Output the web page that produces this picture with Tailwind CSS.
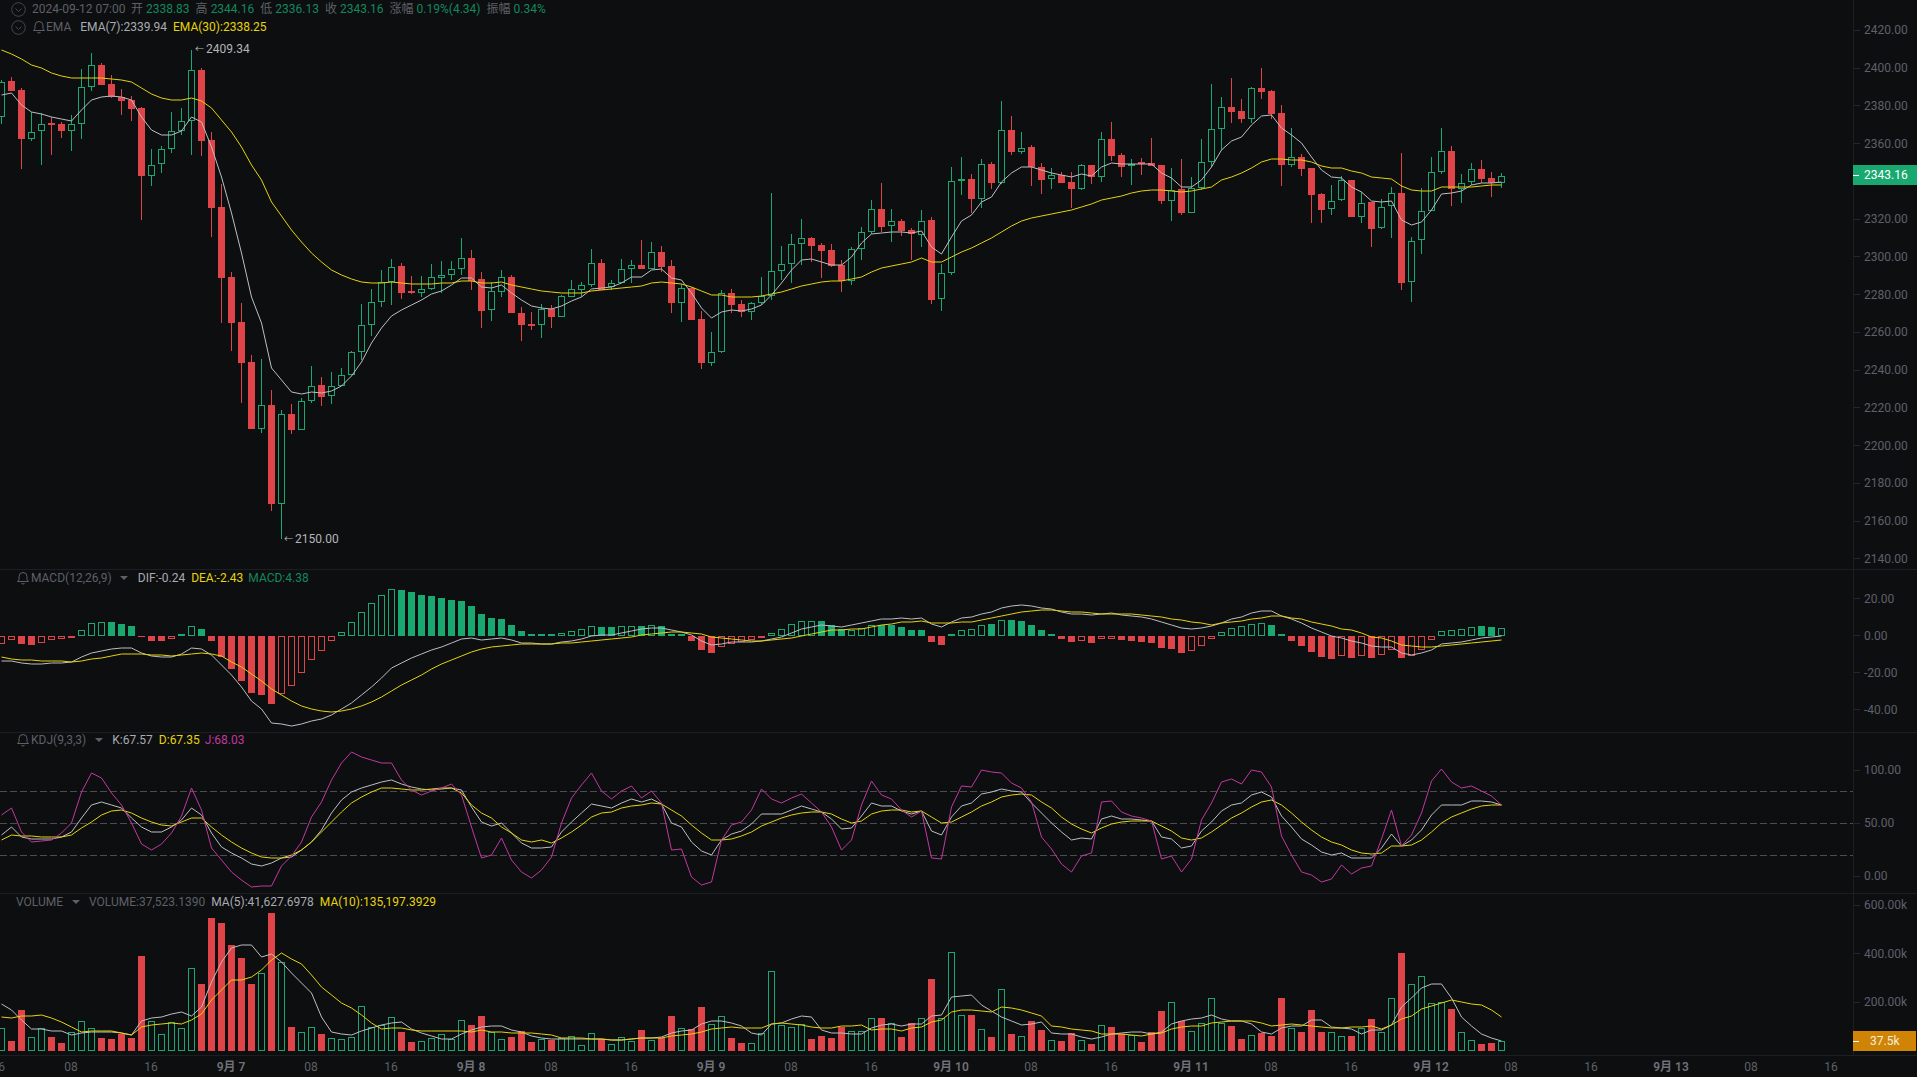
<!DOCTYPE html>
<html lang="zh-CN">
<head>
    <meta charset="UTF-8">
    <meta name="viewport" content="width=device-width, initial-scale=1.0">
    <title>ETH K-line</title>
    <script src="https://cdn.jsdelivr.net/npm/@tailwindcss/browser@4"></script>
</head>
<body class="relative w-[1917px] h-[1077px] overflow-hidden bg-[#0d0e10] text-[12px] leading-none text-[#5e6068] font-['Roboto','Noto_Sans_CJK_SC',sans-serif]">

    <!-- chart canvas, drawn by the script at the bottom -->
    <svg id="chart" class="absolute left-0 top-0" width="1853" height="1055" viewBox="0 0 1853 1055"></svg>

    <div class="absolute inset-0 flex flex-col">

        <!-- Main panel -->
        <section class="flex h-[570px] border-b border-[#1c1e22]">
            <div class="relative flex-1">
                <div class="flex items-center h-[18px]">
                    <svg class="ml-[11px] mr-[6px]" width="15" height="15" viewBox="0 0 15 15" fill="none" stroke="#45474d"><circle cx="7.5" cy="7.5" r="6.8"/><path d="M4.5 6.5l3 3 3-3"/></svg>
                    <span>2024-09-12 07:00</span>
                    <span class="ml-[5.5px]">开</span><span class="ml-[3px] text-[#12895c]">2338.83</span>
                    <span class="ml-[6px]">高</span><span class="ml-[3px] text-[#12895c]">2344.16</span>
                    <span class="ml-[6px]">低</span><span class="ml-[3px] text-[#12895c]">2336.13</span>
                    <span class="ml-[6px]">收</span><span class="ml-[3px] text-[#12895c]">2343.16</span>
                    <span class="ml-[6px]">涨幅</span><span class="ml-[3px] text-[#12895c]">0.19%(4.34)</span>
                    <span class="ml-[6px]">振幅</span><span class="ml-[3px] text-[#12895c]">0.34%</span>
                </div>
                <div class="flex items-center h-[18px]">
                    <svg class="ml-[11px] mr-[6px]" width="15" height="15" viewBox="0 0 15 15" fill="none" stroke="#45474d"><circle cx="7.5" cy="7.5" r="6.8"/><path d="M4.5 6.5l3 3 3-3"/></svg>
                    <svg width="14" height="14" viewBox="0 0 14 14" fill="none" stroke="#5e6068"><path d="M7 1.5a4 4 0 0 0-4 4v3.2L1.5 10.5h11L11 8.7V5.5a4 4 0 0 0-4-4zM5.5 12a1.6 1.6 0 0 0 3 0"/></svg>
                    <span>EMA</span>
                    <span class="ml-[9px] text-[#a9abb0]">EMA(7):2339.94</span>
                    <span class="ml-[6px] text-[#e6d30c]">EMA(30):2338.25</span>
                </div>
                <span class="absolute left-[195px] top-[43px] flex items-center text-[#b4b5b8]"><span class="text-[9px]">←</span><span class="ml-[2px]">2409.34</span></span>
                <span class="absolute left-[284px] top-[533px] flex items-center text-[#b4b5b8]"><span class="text-[9px]">←</span><span class="ml-[2px]">2150.00</span></span>
            </div>
            <div class="relative w-[64px] shrink-0 border-l border-[#1c1e22] pt-[11.5px]">
                <div class="flex items-center h-[37.75px]"><i class="w-[6px] h-px bg-[#24262b]"></i><span class="ml-[4px]">2420.00</span></div>
                <div class="flex items-center h-[37.75px]"><i class="w-[6px] h-px bg-[#24262b]"></i><span class="ml-[4px]">2400.00</span></div>
                <div class="flex items-center h-[37.75px]"><i class="w-[6px] h-px bg-[#24262b]"></i><span class="ml-[4px]">2380.00</span></div>
                <div class="flex items-center h-[37.75px]"><i class="w-[6px] h-px bg-[#24262b]"></i><span class="ml-[4px]">2360.00</span></div>
                <div class="h-[37.75px]"></div>
                <div class="flex items-center h-[37.75px]"><i class="w-[6px] h-px bg-[#24262b]"></i><span class="ml-[4px]">2320.00</span></div>
                <div class="flex items-center h-[37.75px]"><i class="w-[6px] h-px bg-[#24262b]"></i><span class="ml-[4px]">2300.00</span></div>
                <div class="flex items-center h-[37.75px]"><i class="w-[6px] h-px bg-[#24262b]"></i><span class="ml-[4px]">2280.00</span></div>
                <div class="flex items-center h-[37.75px]"><i class="w-[6px] h-px bg-[#24262b]"></i><span class="ml-[4px]">2260.00</span></div>
                <div class="flex items-center h-[37.75px]"><i class="w-[6px] h-px bg-[#24262b]"></i><span class="ml-[4px]">2240.00</span></div>
                <div class="flex items-center h-[37.75px]"><i class="w-[6px] h-px bg-[#24262b]"></i><span class="ml-[4px]">2220.00</span></div>
                <div class="flex items-center h-[37.75px]"><i class="w-[6px] h-px bg-[#24262b]"></i><span class="ml-[4px]">2200.00</span></div>
                <div class="flex items-center h-[37.75px]"><i class="w-[6px] h-px bg-[#24262b]"></i><span class="ml-[4px]">2180.00</span></div>
                <div class="flex items-center h-[37.75px]"><i class="w-[6px] h-px bg-[#24262b]"></i><span class="ml-[4px]">2160.00</span></div>
                <div class="flex items-center h-[37.75px]"><i class="w-[6px] h-px bg-[#24262b]"></i><span class="ml-[4px]">2140.00</span></div>
                <!-- last price tag -->
                <div class="absolute left-0 top-[165px] flex items-center w-[64px] h-[20px] -ml-px bg-[#19a870] text-white">
                    <i class="w-[6px] h-px bg-white"></i><span class="ml-[5px]">2343.16</span>
                </div>
            </div>
        </section>

        <!-- MACD -->
        <section class="flex h-[163px] border-b border-[#1c1e22]">
            <div class="flex-1 flex items-start pl-[16px] pt-[2px]">
                <div class="flex items-center h-[12px]">
                    <svg width="14" height="14" viewBox="0 0 14 14" fill="none" stroke="#5e6068"><path d="M7 1.5a4 4 0 0 0-4 4v3.2L1.5 10.5h11L11 8.7V5.5a4 4 0 0 0-4-4zM5.5 12a1.6 1.6 0 0 0 3 0"/></svg>
                    <span class="ml-px">MACD(12,26,9)</span>
                    <i class="ml-[8px] w-0 h-0 border-x-[4px] border-t-[4px] border-x-transparent border-t-[#5e6068]"></i>
                    <span class="ml-[10px] text-[#a9abb0]">DIF:-0.24</span>
                    <span class="ml-[6px] text-[#e6d30c]">DEA:-2.43</span>
                    <span class="ml-[5px] text-[#12895c]">MACD:4.38</span>
                </div>
            </div>
            <div class="w-[64px] shrink-0 border-l border-[#1c1e22] pt-[10px]">
                <div class="flex items-center h-[37px]"><i class="w-[6px] h-px bg-[#24262b]"></i><span class="ml-[4px]">20.00</span></div>
                <div class="flex items-center h-[37px]"><i class="w-[6px] h-px bg-[#24262b]"></i><span class="ml-[4px]">0.00</span></div>
                <div class="flex items-center h-[37px]"><i class="w-[6px] h-px bg-[#24262b]"></i><span class="ml-[4px]">-20.00</span></div>
                <div class="flex items-center h-[37px]"><i class="w-[6px] h-px bg-[#24262b]"></i><span class="ml-[4px]">-40.00</span></div>
            </div>
        </section>

        <!-- KDJ -->
        <section class="flex h-[161px] border-b border-[#1c1e22]">
            <div class="flex-1 flex items-start pl-[16px] pt-[1px]">
                <div class="flex items-center h-[12px]">
                    <svg width="14" height="14" viewBox="0 0 14 14" fill="none" stroke="#5e6068"><path d="M7 1.5a4 4 0 0 0-4 4v3.2L1.5 10.5h11L11 8.7V5.5a4 4 0 0 0-4-4zM5.5 12a1.6 1.6 0 0 0 3 0"/></svg>
                    <span class="ml-px">KDJ(9,3,3)</span>
                    <i class="ml-[9px] w-0 h-0 border-x-[4px] border-t-[4px] border-x-transparent border-t-[#5e6068]"></i>
                    <span class="ml-[9px] text-[#a9abb0]">K:67.57</span>
                    <span class="ml-[6px] text-[#e6d30c]">D:67.35</span>
                    <span class="ml-[5px] text-[#c2389f]">J:68.03</span>
                </div>
            </div>
            <div class="w-[64px] shrink-0 border-l border-[#1c1e22] pt-[10.5px]">
                <div class="flex items-center h-[53px]"><i class="w-[6px] h-px bg-[#24262b]"></i><span class="ml-[4px]">100.00</span></div>
                <div class="flex items-center h-[53px]"><i class="w-[6px] h-px bg-[#24262b]"></i><span class="ml-[4px]">50.00</span></div>
                <div class="flex items-center h-[53px]"><i class="w-[6px] h-px bg-[#24262b]"></i><span class="ml-[4px]">0.00</span></div>
            </div>
        </section>

        <!-- Volume -->
        <section class="flex h-[162px] border-b border-[#1c1e22]">
            <div class="flex-1 flex items-start pl-[16px] pt-[2px]">
                <div class="flex items-center h-[12px]">
                    <span>VOLUME</span>
                    <i class="ml-[9px] w-0 h-0 border-x-[4px] border-t-[4px] border-x-transparent border-t-[#5e6068]"></i>
                    <span class="ml-[9px]">VOLUME:37,523.1390</span>
                    <span class="ml-[6px] text-[#a9abb0]">MA(5):41,627.6978</span>
                    <span class="ml-[6px] text-[#e6d30c]">MA(10):135,197.3929</span>
                </div>
            </div>
            <div class="relative w-[64px] shrink-0 border-l border-[#1c1e22]">
                <div class="-mt-[13px]">
                    <div class="flex items-center h-[48.5px]"><i class="w-[6px] h-px bg-[#24262b]"></i><span class="ml-[4px]">600.00k</span></div>
                    <div class="flex items-center h-[48.5px]"><i class="w-[6px] h-px bg-[#24262b]"></i><span class="ml-[4px]">400.00k</span></div>
                    <div class="flex items-center h-[48.5px]"><i class="w-[6px] h-px bg-[#24262b]"></i><span class="ml-[4px]">200.00k</span></div>
                </div>
                <div class="absolute left-0 top-[137px] flex items-center w-[63px] h-[20px] -ml-px bg-[#d08405] text-[#f4ecdc]">
                    <i class="w-[6px] h-px bg-white"></i><span class="ml-[11px]">37.5k</span>
                </div>
            </div>
        </section>

        <!-- Time axis -->
        <footer class="flex items-center flex-1 -ml-[49px]">
            <span class="w-[80px] shrink-0 text-right pr-[26px]">16</span>
            <span class="w-[80px] shrink-0 text-center">08</span>
            <span class="w-[80px] shrink-0 text-center">16</span>
            <span class="w-[80px] shrink-0 text-center font-semibold text-[#6f7178]">9月 7</span>
            <span class="w-[80px] shrink-0 text-center">08</span>
            <span class="w-[80px] shrink-0 text-center">16</span>
            <span class="w-[80px] shrink-0 text-center font-semibold text-[#6f7178]">9月 8</span>
            <span class="w-[80px] shrink-0 text-center">08</span>
            <span class="w-[80px] shrink-0 text-center">16</span>
            <span class="w-[80px] shrink-0 text-center font-semibold text-[#6f7178]">9月 9</span>
            <span class="w-[80px] shrink-0 text-center">08</span>
            <span class="w-[80px] shrink-0 text-center">16</span>
            <span class="w-[80px] shrink-0 text-center font-semibold text-[#6f7178]">9月 10</span>
            <span class="w-[80px] shrink-0 text-center">08</span>
            <span class="w-[80px] shrink-0 text-center">16</span>
            <span class="w-[80px] shrink-0 text-center font-semibold text-[#6f7178]">9月 11</span>
            <span class="w-[80px] shrink-0 text-center">08</span>
            <span class="w-[80px] shrink-0 text-center">16</span>
            <span class="w-[80px] shrink-0 text-center font-semibold text-[#6f7178]">9月 12</span>
            <span class="w-[80px] shrink-0 text-center">08</span>
            <span class="w-[80px] shrink-0 text-center">16</span>
            <span class="w-[80px] shrink-0 text-center font-semibold text-[#6f7178]">9月 13</span>
            <span class="w-[80px] shrink-0 text-center">08</span>
            <span class="w-[80px] shrink-0 text-center">16</span>
        </footer>
    </div>

    <script>
        const GREEN = '#19a870', RED = '#df4548', WHITE = '#bdbec2', YELLOW = '#e6d30c', PINK = '#c2389f';

        // hourly candles, in screen pixels: high, body top, body bottom, low, 1 = up
        const candles = [
            [80,82,117,124,1],[77,81,91,91,0],[88,90,139,169,0],[112,132,139,141,1],[113,124,131,165,1],[117,123,125,155,0],
            [122,124,131,138,0],[115,124,131,151,1],[69,87,124,139,1],[53,65,87,91,1],[63,65,85,85,0],[75,84,97,98,0],
            [89,97,101,115,0],[96,100,109,121,0],[107,108,176,220,0],[149,165,176,186,1],[146,149,164,173,1],[112,131,149,153,1],
            [108,121,131,135,1],[50,70,121,155,1],[68,70,141,156,0],[132,140,208,237,0],[184,207,278,323,0],[272,277,323,351,0],
            [303,322,363,403,0],[355,362,429,429,0],[359,405,429,433,1],[390,405,504,511,0],[410,414,504,539,1],[404,414,430,434,0],
            [398,401,430,430,1],[366,386,401,403,1],[377,385,397,406,0],[372,386,396,404,1],[368,375,386,386,1],[351,352,375,375,1],
            [304,325,352,360,1],[289,302,325,336,1],[270,282,302,307,1],[259,267,282,305,1],[263,266,293,299,0],[276,291,293,294,0],
            [276,289,293,297,1],[264,277,289,290,1],[261,275,278,293,1],[261,269,275,280,1],[238,258,269,275,1],[250,258,281,290,0],
            [272,279,311,328,0],[282,291,310,321,1],[270,277,292,297,1],[275,277,313,313,0],[307,313,325,341,0],[312,324,326,330,0],
            [304,309,325,338,1],[305,309,317,328,0],[295,296,317,317,1],[280,289,297,297,1],[282,285,290,297,1],[249,263,285,287,1],
            [259,263,290,290,0],[280,283,287,290,1],[259,269,283,283,1],[260,265,269,283,1],[240,265,269,269,0],[242,252,269,269,1],
            [246,252,267,272,0],[260,266,303,313,0],[284,288,303,322,1],[287,288,320,320,0],[311,319,363,369,0],[332,352,363,366,1],
            [290,293,352,353,1],[289,293,305,313,0],[300,304,312,317,0],[302,303,312,320,1],[277,296,303,305,1],[193,271,296,300,1],
            [246,264,271,280,1],[234,244,264,283,1],[219,238,244,265,1],[237,238,246,262,0],[243,245,251,278,0],[244,250,266,267,0],
            [260,265,281,292,0],[247,249,281,285,1],[227,232,249,260,1],[200,209,232,234,1],[183,209,227,232,0],[209,221,226,242,1],
            [219,221,231,236,0],[228,230,234,260,0],[210,221,235,247,1],[217,220,300,304,0],[264,273,299,311,1],[167,181,273,275,1],
            [157,179,181,195,1],[174,179,199,213,0],[159,164,199,208,1],[162,164,183,189,0],[101,130,183,184,1],[116,130,152,155,0],
            [132,148,152,154,1],[145,147,167,186,0],[163,167,180,194,0],[168,175,179,189,1],[172,175,183,183,0],[172,182,189,208,0],
            [164,165,189,190,1],[165,165,177,184,0],[132,139,177,182,1],[122,139,156,161,0],[153,155,167,177,0],[159,164,166,185,1],
            [158,162,164,175,0],[138,163,166,166,0],[165,165,201,204,0],[168,190,201,221,1],[159,189,213,215,0],[177,188,213,213,1],
            [139,162,188,190,1],[84,129,162,167,1],[97,107,129,150,1],[78,107,112,123,0],[99,111,119,123,0],[87,88,119,123,1],
            [68,88,92,99,0],[90,91,114,119,0],[105,113,165,186,0],[128,157,165,167,1],[154,157,169,176,0],[168,168,195,223,0],
            [193,194,210,223,0],[185,201,209,215,1],[176,180,200,201,1],[180,180,217,217,0],[192,203,217,223,1],[202,202,229,247,0],
            [199,207,228,229,1],[187,193,206,238,1],[153,193,283,290,0],[237,241,282,302,1],[188,211,240,254,1],[157,172,211,211,1],
            [128,151,172,174,1],[146,151,189,206,0],[174,183,189,203,1],[163,169,182,185,1],[160,169,179,183,0],[172,178,183,197,0],
            [173,176,183,188,1]
        ];

        const ema7 = [95,93,105,112,114,117,119,121,110,100,97,96,97,100,117,130,135,135,131,117,122,147,177,213,253,297,323,368,380,392,394,392,393,391,386,376,362,343,328,316,310,305,300,294,291,285,278,278,287,288,285,293,300,306,308,309,306,301,297,289,288,287,283,277,277,270,269,278,280,293,308,318,312,310,311,309,305,295,283,270,260,259,262,265,265,257,243,234,233,232,232,233,231,247,254,237,221,215,202,197,182,173,167,167,170,173,175,177,174,176,167,163,164,164,164,164,173,178,187,187,180,167,150,141,137,125,116,115,128,135,143,157,170,177,178,187,192,201,202,201,220,225,222,210,194,193,191,185,183,183,182];
        const ema30 = [50,54,59,65,68,73,76,78,78,78,78,79,80,82,88,94,98,100,100,98,101,108,120,132,147,165,180,202,216,230,242,253,262,270,275,279,282,283,283,282,283,284,284,284,283,283,281,281,283,283,282,285,287,289,291,292,293,293,293,291,290,289,288,287,286,283,282,283,284,287,291,295,295,297,297,297,296,294,292,289,286,284,282,281,281,279,277,272,268,266,264,262,258,262,262,257,252,248,243,238,232,226,221,218,216,214,212,210,207,204,200,198,196,193,191,190,190,191,192,191,189,187,180,177,173,168,162,159,159,160,160,162,166,168,168,171,173,177,178,179,186,190,191,191,187,187,187,187,186,185,185];

        // MACD histogram: pixels above the zero line at y=636
        const hist = [-8.3,-4,-7.7,-9,-6.7,-4.3,-3.3,-1.7,5.7,12.7,14,14,12,10,-1.3,-5,-5,-2.7,2,9.7,7,-5,-20.7,-33,-45,-57,-59,-68,-57.7,-49.7,-36.7,-23.7,-14.7,-4.7,3.7,13.7,23.7,32.7,40.7,46.7,46,43.7,41.3,40.3,38,36,35,30,22,18,17,11,5,2,1.7,1.7,3,4.7,6.7,9.7,9,9,9.7,9.7,9.7,10.7,9.7,2.5,2,-5.3,-14.3,-17.3,-11,-7.7,-6.3,-3.7,-2.3,3.3,7.3,12.3,15.3,15.3,14.7,10.7,6.7,6.3,8,11.3,11.3,10.7,8.7,5.7,5.7,-6.3,-9.3,1.7,6.3,7.3,11.3,11.7,16.3,15.7,14.7,10.7,5.7,1.7,-3.3,-6.3,-5,-7.3,-3,-3,-4.3,-5.3,-6.3,-7.3,-12.3,-13.3,-17.3,-15.3,-10,-3,4.3,8.3,9.7,12.3,13.3,10.7,1.7,-5.3,-10.3,-16.3,-21.3,-23.3,-20,-22.3,-20,-22.3,-19,-14.3,-22.3,-20.3,-14,-3.7,5.3,6.3,7.3,9.3,9.7,8.7,8.3];
        const histHollow = new Set([0,1,4,5,6,7,8,9,10,17,19,28,29,30,31,32,33,34,35,36,37,38,39,56,57,58,59,62,63,65,72,73,74,75,77,78,79,80,81,85,86,87,96,97,98,100,108,110,111,119,120,121,122,123,124,125,126,134,136,138,139,141,142,143,144,145,146,147,150]);
        const dif = [661,661,663,664,664,663,663,662,657,653,651,649,648,648,653,656,657,657,654,648,649,655,665,675,687,701,709,723,724,726,724,721,719,715,709,703,695,687,678,668,663,658,654,650,647,643,639,638,640,639,638,640,643,643,644,644,642,641,639,636,635,635,633,631,629,628,628,630,632,635,641,645,644,642,642,642,641,639,637,633,629,627,625,626,627,625,623,621,619,619,618,619,618,624,627,622,618,617,614,612,608,606,605,606,608,609,612,614,614,615,614,613,615,616,617,619,622,625,628,629,628,626,623,619,617,613,611,611,616,619,623,628,632,636,638,641,643,646,647,647,653,655,653,650,644,643,642,640,638,637,636];
        const dea = [657,659,660,660,661,661,661,662,661,659,658,656,654,654,654,655,655,656,655,654,653,654,656,662,667,674,681,689,695,701,706,709,711,712,711,709,706,702,697,691,685,680,675,669,664,660,656,652,649,647,646,645,644,644,644,644,643,643,642,641,640,639,638,637,635,634,633,632,632,633,634,637,638,639,640,641,641,640,639,638,636,634,632,630,630,629,629,627,625,624,622,622,621,623,623,623,622,622,620,618,616,614,612,611,610,610,611,612,612,613,614,614,614,614,615,616,617,619,620,622,623,625,623,622,621,619,618,616,616,618,619,622,624,626,629,630,633,637,638,641,645,646,647,647,646,645,644,643,642,641,640];

        const kLine = [835,827,837,839,839,839,837,832,818,805,802,805,808,818,827,832,832,827,820,808,815,833,847,853,858,864,866,863,858,857,850,842,830,813,800,792,788,785,782,780,784,787,789,790,789,788,790,807,822,826,823,833,843,848,848,847,832,822,813,804,806,808,803,799,802,799,804,823,827,842,851,855,840,834,831,824,814,814,814,810,806,809,812,819,829,828,816,803,806,806,811,814,811,831,835,817,806,803,794,792,789,791,792,803,813,823,832,840,838,839,819,816,819,819,820,821,837,839,848,846,831,822,811,805,803,795,792,797,816,827,839,845,852,855,853,858,858,858,848,834,846,840,830,815,805,805,805,801,801,802,805];
        const dLine = [840,835,836,836,837,837,837,835,828,822,815,811,810,813,818,822,825,826,822,818,818,827,835,842,848,853,857,858,858,855,850,842,832,822,812,803,797,792,788,788,789,790,790,789,788,788,793,805,813,818,827,833,840,842,840,843,838,832,825,817,813,812,808,806,805,803,804,810,816,825,833,840,840,839,836,832,826,822,818,815,813,812,812,814,819,823,821,814,811,810,810,812,811,817,823,822,817,812,806,802,797,795,794,795,802,808,817,824,829,833,828,824,822,821,821,821,826,831,838,840,838,832,825,818,813,807,802,800,805,813,822,830,837,842,845,850,853,854,853,846,846,845,840,832,823,817,813,809,806,805,805];
        const jLine = [815,808,832,842,841,840,833,823,792,773,778,793,805,823,844,850,844,833,816,788,810,848,860,872,880,887,886,886,866,856,842,817,802,780,763,752,757,760,763,763,780,790,795,791,788,784,795,827,858,855,838,860,872,878,870,857,823,798,785,773,791,799,791,786,798,791,803,850,849,877,885,882,840,825,822,810,789,799,803,798,794,803,812,827,850,840,805,781,795,799,810,817,811,858,859,807,786,787,770,772,773,783,788,802,837,849,864,872,856,853,802,801,812,816,818,821,859,856,872,859,820,803,782,779,784,770,772,787,836,855,872,875,882,879,865,874,868,866,839,810,846,835,813,781,769,782,788,786,791,796,805];

        // volume bar tops, baseline y=1051
        const volume = [1028,1041,1010,1037,1028,1037,1043,1032,1021,1028,1038,1039,1034,1038,956,1021,1034,1022,1028,968,984,918,923,945,958,984,973,913,962,1027,1032,1027,1034,1038,1039,1037,1006,1027,1025,1017,1032,1042,1041,1038,1034,1039,1020,1025,1016,1032,1039,1037,1031,1042,1039,1040,1038,1036,1045,1033,1039,1044,1037,1041,1030,1040,1038,1016,1028,1029,1007,1024,1016,1038,1043,1043,1033,971,1025,1027,1024,1039,1036,1038,1027,1031,1031,1018,1018,1023,1037,1023,1018,979,1018,952,1015,1015,1029,1037,989,1034,1036,1021,1030,1040,1041,1033,1040,1044,1025,1027,1034,1035,1042,1032,1011,1002,1021,1031,1023,998,1023,1026,1039,1035,1033,1036,998,1028,1032,1010,1032,1032,1036,1036,1028,1019,1032,998,953,984,976,1003,1002,1009,1032,1040,1044,1043,1041];
        const volMa5 = [1004,1010,1020,1029,1029,1031,1031,1035,1033,1032,1032,1032,1033,1035,1021,1018,1017,1014,1012,1016,1007,982,962,948,945,945,957,954,962,973,983,993,1017,1032,1034,1035,1031,1028,1025,1023,1022,1029,1033,1036,1039,1039,1034,1030,1027,1026,1026,1030,1032,1036,1038,1039,1039,1039,1039,1039,1039,1040,1040,1039,1038,1038,1037,1033,1031,1030,1024,1021,1021,1023,1026,1033,1035,1024,1023,1019,1016,1017,1030,1033,1033,1034,1034,1028,1025,1024,1026,1024,1024,1016,1015,997,996,995,1005,1011,1017,1021,1025,1024,1022,1033,1034,1034,1037,1039,1037,1034,1033,1032,1032,1034,1032,1024,1021,1019,1018,1015,1019,1021,1021,1024,1032,1034,1028,1026,1026,1020,1020,1027,1028,1029,1034,1030,1030,1025,1007,998,988,984,984,998,1017,1026,1034,1038,1041];
        const volMa10 = [1017,1018,1016,1016,1015,1018,1022,1027,1032,1031,1031,1031,1033,1035,1027,1025,1024,1023,1024,1020,1014,1000,990,980,980,977,970,960,953,959,964,975,987,995,1003,1008,1015,1023,1029,1028,1028,1030,1031,1031,1031,1031,1031,1032,1030,1032,1032,1033,1033,1033,1034,1035,1038,1038,1038,1039,1039,1040,1040,1039,1038,1038,1038,1036,1035,1034,1032,1029,1028,1027,1028,1028,1028,1024,1023,1024,1025,1027,1028,1028,1026,1026,1025,1030,1029,1029,1031,1028,1027,1022,1020,1012,1010,1010,1011,1012,1007,1008,1010,1013,1016,1026,1027,1029,1030,1031,1034,1034,1034,1035,1036,1034,1033,1029,1027,1026,1026,1023,1022,1021,1021,1021,1023,1026,1025,1024,1025,1026,1027,1028,1028,1027,1027,1026,1029,1025,1019,1016,1009,1006,1003,1000,1002,1004,1005,1010,1017];

        const xAt = i => i * 10 + 1;
        let out = '';

        function box(i, top, bottom, color, hollow) {
            const left = xAt(i) - 3;
            if (hollow) {
                return `<rect x="${left + .5}" y="${top + .5}" width="6" height="${Math.max(bottom - top - 1, 0)}" fill="none" stroke="${color}" shape-rendering="crispEdges"/>`;
            }
            return `<rect x="${left}" y="${top}" width="7" height="${Math.max(bottom - top, 1)}" fill="${color}" shape-rendering="crispEdges"/>`;
        }

        function wick(i, top, bottom, color) {
            if (bottom <= top) return '';
            return `<rect x="${xAt(i)}" y="${top}" width="1" height="${bottom - top}" fill="${color}" shape-rendering="crispEdges"/>`;
        }

        function line(values, color) {
            const pts = values.map((y, i) => `${xAt(i) + .5},${y}`).join(' ');
            return `<polyline points="${pts}" fill="none" stroke="${color}" stroke-width="1"/>`;
        }

        // candles
        candles.forEach(([hi, top, bot, lo, up], i) => {
            const color = up ? GREEN : RED;
            out += wick(i, hi, top, color) + wick(i, bot, lo, color);
            out += box(i, top, bot, color, up);
        });
        out += line(ema7, WHITE) + line(ema30, YELLOW);

        // macd
        hist.forEach((h, i) => {
            const y = Math.round(636 - h);
            const top = Math.min(y, 636), bottom = Math.max(y, 636);
            out += box(i, top, bottom, h > 0 ? GREEN : RED, histHollow.has(i));
        });
        out += line(dif, WHITE) + line(dea, YELLOW);

        // kdj guide lines
        [791, 823, 855].forEach(y => {
            out += `<line x1="0" x2="1853" y1="${y + .5}" y2="${y + .5}" stroke="#4a4c52" stroke-dasharray="7 3"/>`;
        });
        out += line(kLine, WHITE) + line(dLine, YELLOW) + line(jLine, PINK);

        // volume
        volume.forEach((top, i) => {
            const up = candles[i][4];
            out += box(i, top, 1051, up ? GREEN : RED, up);
        });
        out += line(volMa5, WHITE) + line(volMa10, YELLOW);

        document.getElementById('chart').innerHTML = out;
    </script>
</body>
</html>
